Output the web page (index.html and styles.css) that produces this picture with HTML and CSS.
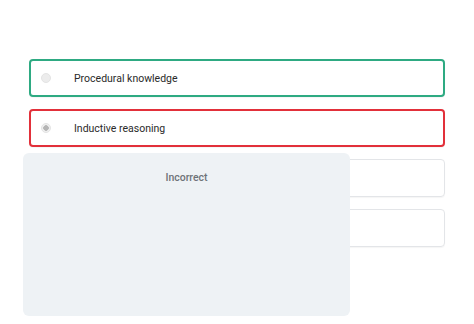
FILE: index.html
```html
<!DOCTYPE html>
<html>
	<head>
		<meta charset="utf-8">
		<title>Quiz</title>
		<link rel="stylesheet" href="styles.css">
	</head>
	<body>
		<div class="quiz">
			<div class="options">
				<div class="option correct">
					<span class="radio"></span>
					<span class="label">Procedural knowledge</span>
				</div>
				<div class="option wrong">
					<span class="radio checked"></span>
					<span class="label">Inductive reasoning</span>
				</div>
				<div class="option">
					<span class="radio"></span>
					<span class="label"></span>
				</div>
				<div class="option">
					<span class="radio"></span>
					<span class="label"></span>
				</div>
			</div>
			<div class="feedback">
				<span class="feedback-title">Incorrect</span>
			</div>
		</div>
	</body>
</html>
```

FILE: styles.css
```css
html, body {
	height: 100%;
	width: 100%;
}
body {
	margin: 0;
	background-color: #FFFFFF;
	font-family: Roboto, "Liberation Sans", sans-serif;
	color: #2a2a2a;
}
.quiz {
	position: relative;
	padding: 59px 29px 0 29px;
}
.options {
	display: flex;
	flex-direction: column;
	gap: 12px;
}
.option {
	box-sizing: border-box;
	height: 38px;
	display: flex;
	align-items: center;
	border: solid 1px #e3e5e8;
	border-radius: 4px;
	padding-left: 11px;
	box-shadow: 0 1px 1px rgba(0, 0, 0, 0.04);
}
.option.correct {
	border: solid 2px #2eaa82;
	padding-left: 10px;
}
.option.wrong {
	border: solid 2px #e2303a;
	padding-left: 10px;
}
.radio {
	display: inline-block;
	box-sizing: border-box;
	width: 10px;
	height: 10px;
	border-radius: 50%;
	background-color: #ececec;
	border: solid 1px #e4e4e4;
}
.radio.checked {
	background-color: #f0f0f0;
	background-image: radial-gradient(circle, #b5b5b5 0, #b5b5b5 2.5px, transparent 3px);
}
.label {
	margin-left: 23px;
	font-size: 10.5px;
}
.feedback {
	position: absolute;
	left: 23px;
	top: 153px;
	width: 327px;
	height: 163px;
	background-color: #eef2f5;
	border-radius: 6px;
	text-align: center;
	padding-top: 13px;
	box-sizing: border-box;
}
.feedback-title {
	font-size: 10.5px;
	font-weight: 500;
	color: #6e7378;
}
```
